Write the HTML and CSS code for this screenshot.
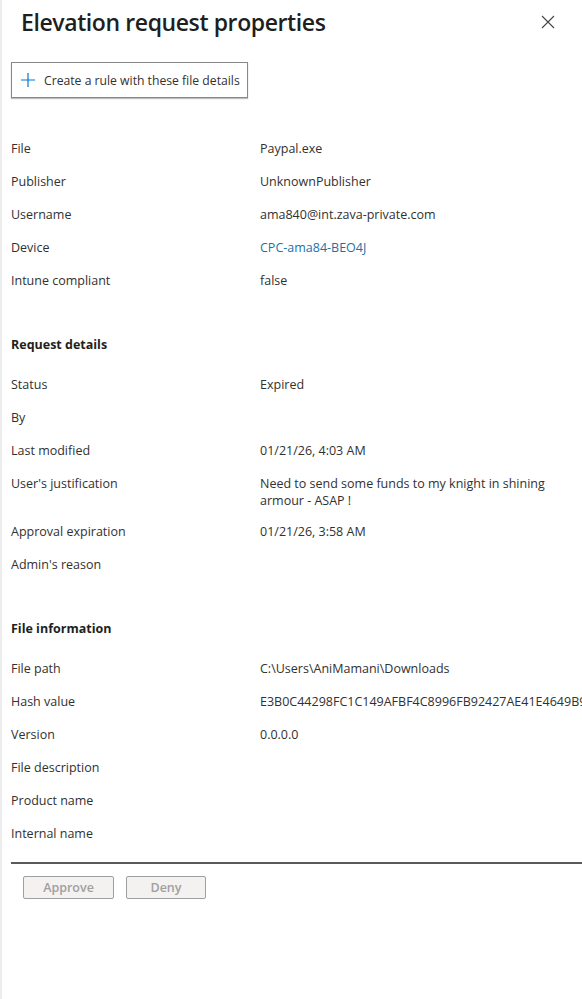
FILE: index.html
```html
<!DOCTYPE html>
<html lang="en">
<head>
<meta charset="utf-8">
<title>Elevation request properties</title>
<link rel="stylesheet" href="styles.css">
</head>
<body>
<div class="panel">
  <header class="head">
    <h1 class="title">Elevation request properties</h1>
    <button class="close" aria-label="Close">
      <svg width="14" height="14" viewBox="0 0 14 14"><path d="M1 1L13 13M13 1L1 13" stroke="#444" stroke-width="1.1" fill="none"/></svg>
    </button>
  </header>
  <div class="toolbar">
    <button class="rule-btn">
      <svg width="14" height="14" viewBox="0 0 14 14"><path d="M7 0V14M0 7H14" stroke="#0078d4" stroke-width="1.2" fill="none"/></svg>
      <span>Create a rule with these file details</span>
    </button>
  </div>

  <section class="group first">
    <div class="row"><div class="k">File</div><div class="v">Paypal.exe</div></div>
    <div class="row"><div class="k">Publisher</div><div class="v">UnknownPublisher</div></div>
    <div class="row"><div class="k">Username</div><div class="v">ama840@int.zava-private.com</div></div>
    <div class="row"><div class="k">Device</div><div class="v link">CPC-ama84-BEO4J</div></div>
    <div class="row"><div class="k">Intune compliant</div><div class="v">false</div></div>
  </section>

  <section class="group">
    <h2 class="sec">Request details</h2>
    <div class="row"><div class="k">Status</div><div class="v">Expired</div></div>
    <div class="row"><div class="k">By</div><div class="v"></div></div>
    <div class="row"><div class="k">Last modified</div><div class="v">01/21/26, 4:03 AM</div></div>
    <div class="row"><div class="k">User's justification</div><div class="v wrap">Need to send some funds to my knight in shining armour - ASAP !</div></div>
    <div class="row"><div class="k">Approval expiration</div><div class="v">01/21/26, 3:58 AM</div></div>
    <div class="row"><div class="k">Admin's reason</div><div class="v"></div></div>
  </section>

  <section class="group">
    <h2 class="sec">File information</h2>
    <div class="row"><div class="k">File path</div><div class="v">C:\Users\AniMamani\Downloads</div></div>
    <div class="row"><div class="k">Hash value</div><div class="v nowrap">E3B0C44298FC1C149AFBF4C8996FB92427AE41E4649B934CA495991B7852B855</div></div>
    <div class="row"><div class="k">Version</div><div class="v">0.0.0.0</div></div>
    <div class="row"><div class="k">File description</div><div class="v"></div></div>
    <div class="row"><div class="k">Product name</div><div class="v"></div></div>
    <div class="row"><div class="k">Internal name</div><div class="v"></div></div>
  </section>

  <footer class="foot">
    <button class="act" disabled>Approve</button>
    <button class="act deny" disabled>Deny</button>
  </footer>
</div>
</body>
</html>
```

FILE: styles.css
```css
html, body {
  margin: 0;
  padding: 0;
  background: #fff;
}
body {
  font-family: "Open Sans", "Noto Sans", sans-serif;
  color: #323130;
  overflow: hidden;
}
.panel {
  width: 580px;
  height: 999px;
  border-left: 2px solid #ececec;
  overflow: hidden;
}
.head {
  display: flex;
  align-items: center;
  justify-content: space-between;
  padding: 5px 27px 0 19px;
  height: 34px;
}
.title {
  margin: 0;
  font-size: 23px;
  font-weight: 600;
  color: #201f1e;
  letter-spacing: -0.4px;
}
.close {
  background: none;
  border: 0;
  padding: 0;
  display: flex;
}
.toolbar {
  padding: 23px 0 0 9px;
}
.rule-btn {
  display: flex;
  align-items: center;
  gap: 9px;
  height: 36px;
  padding: 0 7px 0 9px;
  background: #fff;
  border: 1px solid #8a8886;
  box-shadow: 0 1px 1px rgba(0,0,0,0.25);
  font: inherit;
  font-size: 12.2px;
  color: #323130;
}
.group {
  padding: 0 0 0 9px;
}
.group.first {
  padding-top: 42px;
}
.sec {
  margin: 0 0 23px;
  padding-top: 31px;
  line-height: 17px;
  font-size: 12.5px;
  font-weight: 700;
  color: #201f1e;
}
.row {
  display: flex;
  min-height: 33px;
  font-size: 12.5px;
  line-height: 17px;
}
.k {
  width: 249px;
  flex: none;
}
.v {
  flex: 1;
  min-width: 0;
}
.v.wrap {
  padding-bottom: 14px;
  max-width: 290px;
}
.v.nowrap {
  white-space: nowrap;
  overflow: hidden;
}
.link {
  color: #1a73a8;
}
.foot {
  margin: 4px 0 0 9px;
  border-top: 2px solid #5a5a5a;
  padding: 12px 0 0 12px;
  display: flex;
  gap: 12px;
}
.act {
  height: 23px;
  width: 91px;
  background: #f3f2f1;
  border: 1px solid #a19f9d;
  border-radius: 2px;
  font: inherit;
  font-size: 12.5px;
  font-weight: 600;
  color: #a19f9d;
}
.act.deny {
  width: 80px;
}
```
